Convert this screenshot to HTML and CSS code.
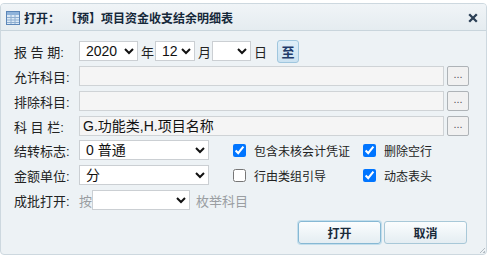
FILE: index.html
```html
<!DOCTYPE html>
<html>
<head>
<meta charset="utf-8">
<link rel="stylesheet" href="styles.css">
</head>
<body>
<div class="dialog">
  <div class="titlebar">
    <svg class="ticon" width="14" height="14" viewBox="0 0 14 14">
      <rect x="0.5" y="0.5" width="13" height="13" fill="#dbe9f6" stroke="#5b86b8"/>
      <rect x="1" y="1" width="12" height="3" fill="#8fb3da"/>
      <path d="M1 6.5H13M1 9H13M1 11.5H13M5 4V13M9 4V13" stroke="#8eaed0" stroke-width="1"/>
    </svg>
    <span class="ttext">打开：<span class="gap"></span>【预】项目资金收支结余明细表</span>
    <svg class="close" width="10" height="10" viewBox="0 0 10 10">
      <path d="M1.2 1.2L8.8 8.8M8.8 1.2L1.2 8.8" stroke="#2b3f55" stroke-width="2.3"/>
    </svg>
  </div>
  <div class="body">
    <div class="row">
      <span class="lbl">报 告 期:</span>
      <select class="sel w59"><option>2020</option></select>
      <span class="unit">年</span>
      <select class="sel w40"><option>12</option></select>
      <span class="unit">月</span>
      <select class="sel w39"><option></option></select>
      <span class="unit">日</span>
      <button class="to">至</button>
    </div>
    <div class="row">
      <span class="lbl">允许科目:</span>
      <div class="field"></div>
      <button class="more">...</button>
    </div>
    <div class="row">
      <span class="lbl">排除科目:</span>
      <div class="field"></div>
      <button class="more">...</button>
    </div>
    <div class="row">
      <span class="lbl">科 目 栏:</span>
      <div class="field">G.功能类,H.项目名称</div>
      <button class="more">...</button>
    </div>
    <div class="row">
      <span class="lbl">结转标志:</span>
      <select class="sel w130"><option>0 普通</option></select>
      <label class="chk c1"><input type="checkbox" checked><span>包含未核会计凭证</span></label>
      <label class="chk"><input type="checkbox" checked><span>删除空行</span></label>
    </div>
    <div class="row">
      <span class="lbl">金额单位:</span>
      <select class="sel w130"><option>分</option></select>
      <label class="chk c1"><input type="checkbox"><span>行由类组引导</span></label>
      <label class="chk"><input type="checkbox" checked><span>动态表头</span></label>
    </div>
    <div class="row">
      <span class="lbl">成批打开:</span>
      <span class="grey">按</span>
      <select class="sel w98"><option></option></select>
      <span class="grey enum">枚举科目</span>
    </div>
    <div class="actions">
      <button class="btn primary">打开</button>
      <button class="btn">取消</button>
    </div>
  </div>
  <div class="grip"></div>
</div>
</body>
</html>
```
FILE: styles.css
```css
html, body {
  margin: 0;
  padding: 0;
  background: #ffffff;
}
body {
  font-family: "Liberation Sans", "Noto Sans CJK SC", sans-serif;
  font-size: 13px;
  color: #222;
  padding-top: 3px;
}
.dialog {
  position: relative;
  width: 487px;
  height: 252px;
  box-sizing: border-box;
  border: 1px solid #cdd8df;
  border-radius: 4px;
  background: #edf2f5;
  overflow: hidden;
}
.titlebar {
  height: 26px;
  display: flex;
  align-items: center;
  background: linear-gradient(#f0f4f7, #e5ecf0);
  border-bottom: 1px solid #c9d5dc;
  padding-left: 5px;
}
.ticon {
  margin-top: 2px;
  flex: none;
}
.ttext {
  margin-left: 4px;
  font-weight: bold;
  font-size: 12px;
  font-family: "Noto Sans CJK SC", sans-serif;
  color: #15283a;
  margin-top: 1px;
}
.gap {
  display: inline-block;
  width: 5px;
}
.close {
  margin-left: auto;
  margin-right: 8px;
  margin-top: 2px;
  flex: none;
}
.body {
  padding: 10px 0 0 13px;
}
.row {
  display: flex;
  align-items: center;
  height: 20px;
  margin-bottom: 5px;
}
.row:nth-child(4) { margin-bottom: 4px; }
.lbl {
  width: 65px;
  flex: none;
  font-size: 13px;
  color: #222;
}
.sel {
  height: 20px;
  box-sizing: border-box;
  border: 1px solid #cbcfd3;
  border-radius: 0;
  background: #fff;
  font-family: "Liberation Sans", "Noto Sans CJK SC", sans-serif;
  font-size: 14px;
  color: #111;
  padding: 0 0 0 2px;
  margin: 0;
}
.w59 { width: 59px; }
.w40 { width: 40px; }
.w39 { width: 39px; }
.w130 { width: 130px; }
.w98 { width: 98px; }
.unit {
  width: 17px;
  text-align: left;
  padding-left: 3px;
  box-sizing: border-box;
  font-size: 13px;
}
.unit:nth-of-type(4) { width: 26px; }
.to {
  width: 22px;
  height: 23px;
  margin: 0;
  padding: 0;
  border: 1px solid #9fc6de;
  border-radius: 3px;
  background: linear-gradient(#dfeef8, #cbe2f1);
  color: #1e3a6a;
  font-weight: bold;
  font-size: 13px;
  font-family: "Noto Sans CJK SC", sans-serif;
}
.field {
  width: 365px;
  height: 20px;
  box-sizing: border-box;
  border: 1px solid #cfd3d6;
  background: #f5f5f5;
  font-size: 14px;
  padding-left: 3px;
  line-height: 18px;
  color: #111;
}
.more {
  width: 22px;
  height: 20px;
  margin: 0 0 0 3px;
  padding: 0 0 4px;
  box-sizing: border-box;
  border: 1px solid #aeb3b7;
  border-radius: 2px;
  background: #f1f1f1;
  font-size: 11px;
  line-height: 10px;
  color: #555;
}
.chk {
  display: flex;
  align-items: center;
  font-size: 12px;
  color: #222;
}
.chk input {
  width: 13px;
  height: 13px;
  margin: 0 8px 0 0;
}
.c1 {
  margin-left: 24px;
  width: 130px;
}
.grey {
  color: #9a9ea2;
  font-size: 13px;
}
.grey:first-of-type { width: 16px; margin-left: 1px; }
.enum { margin-left: 6px; }
.actions {
  display: flex;
  justify-content: flex-end;
  margin-top: 11px;
  padding-right: 19px;
  gap: 3px;
}
.btn {
  width: 83px;
  height: 23px;
  margin: 0;
  border: 1px solid #a8c8d8;
  border-radius: 3px;
  background: linear-gradient(#fbfdfe, #e4edf2);
  font-weight: bold;
  font-size: 12px;
  color: #1a2a3a;
  font-family: "Noto Sans CJK SC", sans-serif;
}
.primary {
  border-color: #86b8d4;
  box-shadow: 0 0 0 1px #c3deec;
}
.grip {
  position: absolute;
  right: 1px;
  bottom: 1px;
  width: 5px;
  height: 5px;
  background: linear-gradient(135deg, transparent 45%, #b3bcc3 45%, #b3bcc3 55%, transparent 55%, transparent 75%, #b3bcc3 75%);
}
```
